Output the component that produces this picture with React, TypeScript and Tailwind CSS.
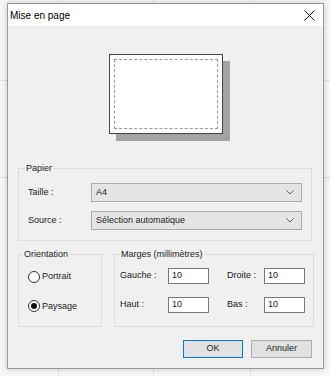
import React from 'react';

const font = { fontFamily: '"Liberation Sans", Arial, sans-serif' };

function Chevron() {
  return (
    <svg width="8" height="5" viewBox="0 0 8 5" className="shrink-0">
      <path d="M0.5 0.5 L4 4 L7.5 0.5" fill="none" stroke="#606060" strokeWidth="1" />
    </svg>
  );
}

function Combo({ value }: { value: string }) {
  return (
    <div className="flex items-center justify-between w-[211px] h-[19px] bg-[#e5e5e5] border border-[#acacac] pl-[4px] pr-[7px]">
      <span>{value}</span>
      <Chevron />
    </div>
  );
}

function Radio({ label, checked }: { label: string; checked?: boolean }) {
  return (
    <div className="flex items-center gap-[2px]">
      <div className="w-[12px] h-[12px] rounded-full border border-[#333] bg-white flex items-center justify-center">
        {checked && <div className="w-[6px] h-[6px] rounded-full bg-[#111]" />}
      </div>
      <span>{label}</span>
    </div>
  );
}

function Field({ value }: { value: string }) {
  return (
    <div className="w-[41px] h-[16px] bg-white border border-[#7a7a7a] pl-[3px] flex items-center">
      {value}
    </div>
  );
}

export default function App() {
  return (
    <div className="relative w-[330px] h-[376px] bg-[#f7f7f7] overflow-hidden text-[9px] text-[#1a1a1a]" style={font}>
      {/* sheet grid behind the dialog */}
      <div className="absolute left-[58px] top-0 w-px h-full bg-[#e2e2e2]" />
      <div className="absolute left-[153px] top-0 w-px h-full bg-[#e2e2e2]" />
      <div className="absolute left-[250px] top-0 w-px h-full bg-[#e2e2e2]" />
      <div className="absolute left-0 top-[80px] w-full h-px bg-[#e2e2e2]" />
      <div className="absolute left-0 top-[177px] w-full h-px bg-[#ecd6d6]" />

      {/* dialog */}
      <div className="relative ml-[7px] mt-[3px] w-[317px] h-[366px] flex flex-col bg-[#f0f0f0] border border-[#9a9a9a] shadow-[0_0_6px_rgba(0,0,0,0.2)]">
        <div className="h-[22px] bg-white flex items-center justify-between pl-[2px] pr-[8px] text-[10px] text-black">
          <span>Mise en page</span>
          <svg width="11" height="11" viewBox="0 0 11 11">
            <path d="M0.5 0.5 L10.5 10.5 M10.5 0.5 L0.5 10.5" stroke="#111" strokeWidth="1" />
          </svg>
        </div>

        {/* paper preview */}
        <div className="flex justify-center mt-[28px]">
          <div className="w-[114px] h-[80px] bg-white border border-[#444] p-[4px] shadow-[7px_7px_0_#a3a3a3]">
            <div className="w-full h-full border border-dashed border-[#999]" />
          </div>
        </div>

        <fieldset className="ml-[10px] mt-[28px] w-[294px] border border-[#dcdcdc]">
          <legend className="ml-[6px] px-[1px] leading-[12px]">Papier</legend>
          <div className="flex flex-col gap-[9px] pl-[9px] pr-[9px] pt-[9px] pb-[10px]">
            <div className="flex items-center justify-between">
              <span>Taille :</span>
              <Combo value="A4" />
            </div>
            <div className="flex items-center justify-between">
              <span>Source :</span>
              <Combo value="Sélection automatique" />
            </div>
          </div>
        </fieldset>

        <div className="flex gap-[12px] ml-[10px] mt-[7px]">
          <fieldset className="w-[84px] h-[79px] border border-[#dcdcdc]">
            <legend className="ml-[4px] px-[1px] leading-[12px]">Orientation</legend>
            <div className="flex flex-col gap-[16px] pl-[9px] pt-[10px]">
              <Radio label="Portrait" />
              <Radio label="Paysage" checked />
            </div>
          </fieldset>

          <fieldset className="w-[200px] h-[79px] border border-[#dcdcdc]">
            <legend className="ml-[5px] px-[1px] leading-[12px]">Marges (millimètres)</legend>
            <div className="grid grid-cols-[48px_41px_55px_41px] gap-y-[13px] items-center pl-[5px] pt-[8px]">
              <span>Gauche :</span>
              <Field value="10" />
              <span className="pl-[18px]">Droite :</span>
              <Field value="10" />
              <span>Haut :</span>
              <Field value="10" />
              <span className="pl-[18px]">Bas :</span>
              <Field value="10" />
            </div>
          </fieldset>
        </div>

        <div className="flex justify-end gap-[8px] mt-[13px] pr-[11px]">
          <button className="w-[60px] h-[18px] bg-[#e1e1e1] border border-[#0078d7] text-[9px]">OK</button>
          <button className="w-[61px] h-[18px] bg-[#e1e1e1] border border-[#adadad] text-[9px]">Annuler</button>
        </div>
      </div>
    </div>
  );
}
